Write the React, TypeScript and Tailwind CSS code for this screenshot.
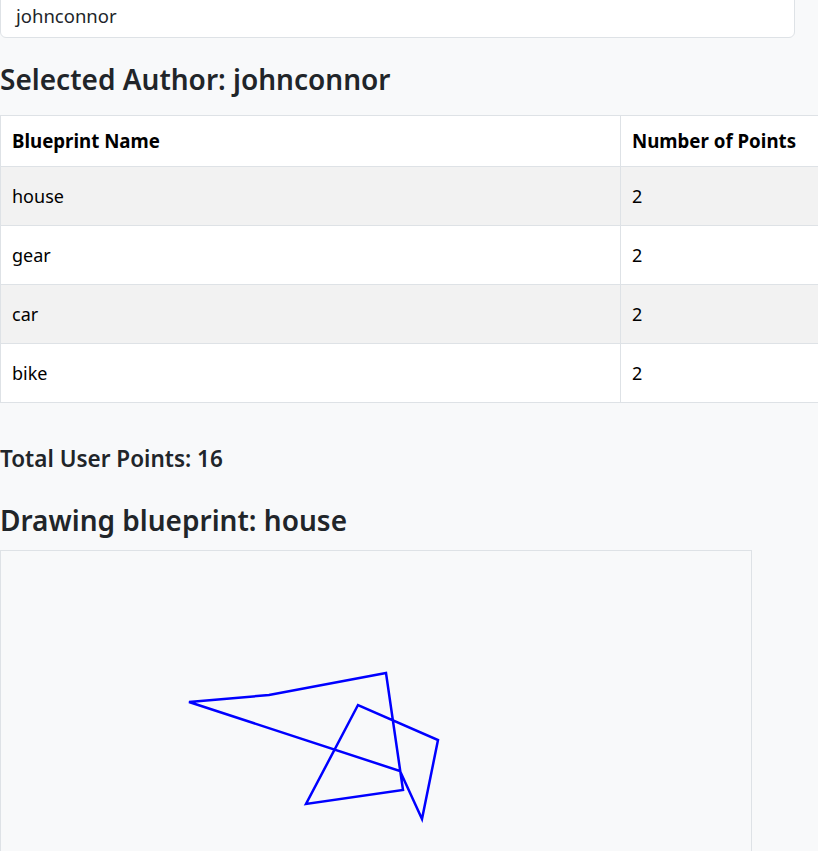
import React from "react";

const blueprints = [
  { name: "house", points: 2 },
  { name: "gear", points: 2 },
  { name: "car", points: 2 },
  { name: "bike", points: 2 },
];

// canvas-space points of the "house" drawing
const drawing = [
  [188, 151],
  [268, 144],
  [385, 122],
  [402, 239],
  [305, 253],
  [357, 154],
  [437, 189],
  [421, 268],
  [399, 220],
];

const App = () => {
  return (
    <div className="h-[851px] w-[818px] overflow-hidden bg-[#f8f9fa] font-['Noto_Sans',sans-serif] text-[#212529]">
      <div className="-mt-[6px] flex h-[44px] w-[795px] items-center rounded-md border border-[#dee2e6] bg-white px-[15px] text-[18.5px]">
        johnconnor
      </div>

      <h2 className="mt-[25px] text-[28px] font-semibold leading-[1.2]">
        Selected Author: johnconnor
      </h2>

      <table className="mt-[18px] w-[880px] border-collapse text-[18px] text-black">
        <thead>
          <tr className="bg-white">
            <th className="w-[620px] border border-[#dee2e6] px-[11px] py-[12px] text-left text-[18.7px] font-bold leading-[26px]">
              Blueprint Name
            </th>
            <th className="border border-[#dee2e6] px-[11px] py-[12px] text-left text-[18.7px] font-bold leading-[26px]">
              Number of Points
            </th>
          </tr>
        </thead>
        <tbody>
          {blueprints.map((bp, i) => (
            <tr key={bp.name} className={i % 2 === 0 ? "bg-[#f2f2f2]" : "bg-white"}>
              <td className="border border-[#dee2e6] px-[11px] py-[16px] leading-[26px]">{bp.name}</td>
              <td className="border border-[#dee2e6] px-[11px] py-[16px] leading-[26px]">{bp.points}</td>
            </tr>
          ))}
        </tbody>
      </table>

      <h4 className="mt-[42px] text-[22.5px] font-semibold leading-[1.2]">Total User Points: 16</h4>

      <h3 className="mt-[32px] text-[28px] font-semibold leading-[1.2]">Drawing blueprint: house</h3>

      <div className="mt-[13px] h-[500px] w-[752px] border border-[#dee2e6] bg-[#f8f9fa]">
        <svg width="750" height="498" className="block">
          <polygon
            points={drawing.map((p) => p.join(",")).join(" ")}
            fill="none"
            stroke="#0000ff"
            strokeWidth="2.5"
          />
        </svg>
      </div>
    </div>
  );
};

export default App;
